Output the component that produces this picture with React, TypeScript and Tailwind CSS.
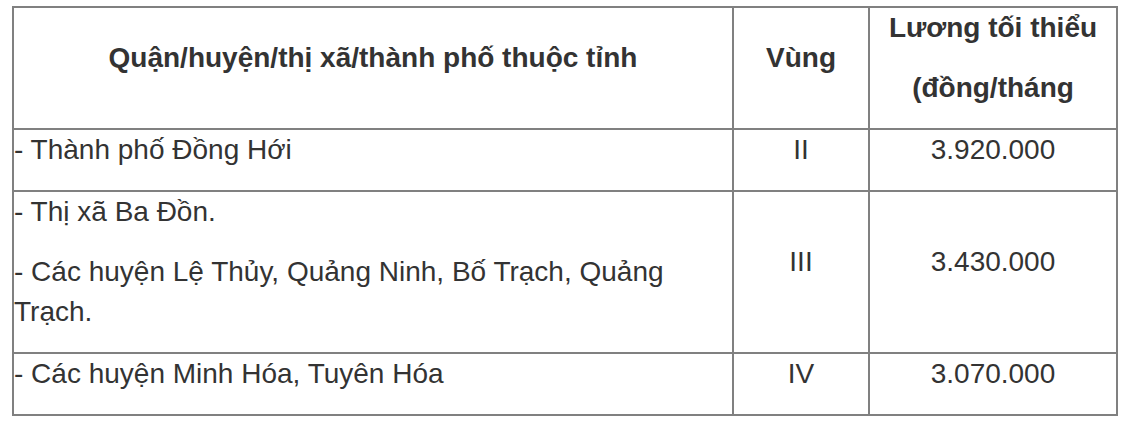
import React from "react";

const rows = [
  { place: ["- Thành phố Đồng Hới"], zone: "II", wage: "3.920.000" },
  {
    place: ["- Thị xã Ba Đồn.", "- Các huyện Lệ Thủy, Quảng Ninh, Bố Trạch, Quảng Trạch."],
    zone: "III",
    wage: "3.430.000",
  },
  { place: ["- Các huyện Minh Hóa, Tuyên Hóa"], zone: "IV", wage: "3.070.000" },
];

const cell = "bg-white flex flex-col justify-center";
const para = "leading-[40px] mb-[20px]";

export default function App() {
  return (
    <div className="min-h-screen bg-white pt-[6px] pl-[12px] font-['Liberation_Sans',Arial,sans-serif] text-[28px] text-[#333333]">
      <div className="grid w-[1106px] grid-cols-[718px_134px_246px] gap-[2px] bg-[#808080] p-[2px]">
        {/* header */}
        <div className={`${cell} text-center font-bold`}>
          <p className={para}>Quận/huyện/thị xã/thành phố thuộc tỉnh</p>
        </div>
        <div className={`${cell} text-center font-bold`}>
          <p className={para}>Vùng</p>
        </div>
        <div className={`${cell} text-center font-bold`}>
          <p className={para}>Lương tối thiểu</p>
          <p className={para}>(đồng/tháng</p>
        </div>

        {rows.map((row, i) => (
          <React.Fragment key={i}>
            <div className={cell}>
              {row.place.map((line, j) => (
                <p key={j} className={para}>
                  {line}
                </p>
              ))}
            </div>
            <div className={`${cell} text-center`}>
              <p className={para}>{row.zone}</p>
            </div>
            <div className={`${cell} text-center`}>
              <p className={para}>{row.wage}</p>
            </div>
          </React.Fragment>
        ))}
      </div>
    </div>
  );
}
